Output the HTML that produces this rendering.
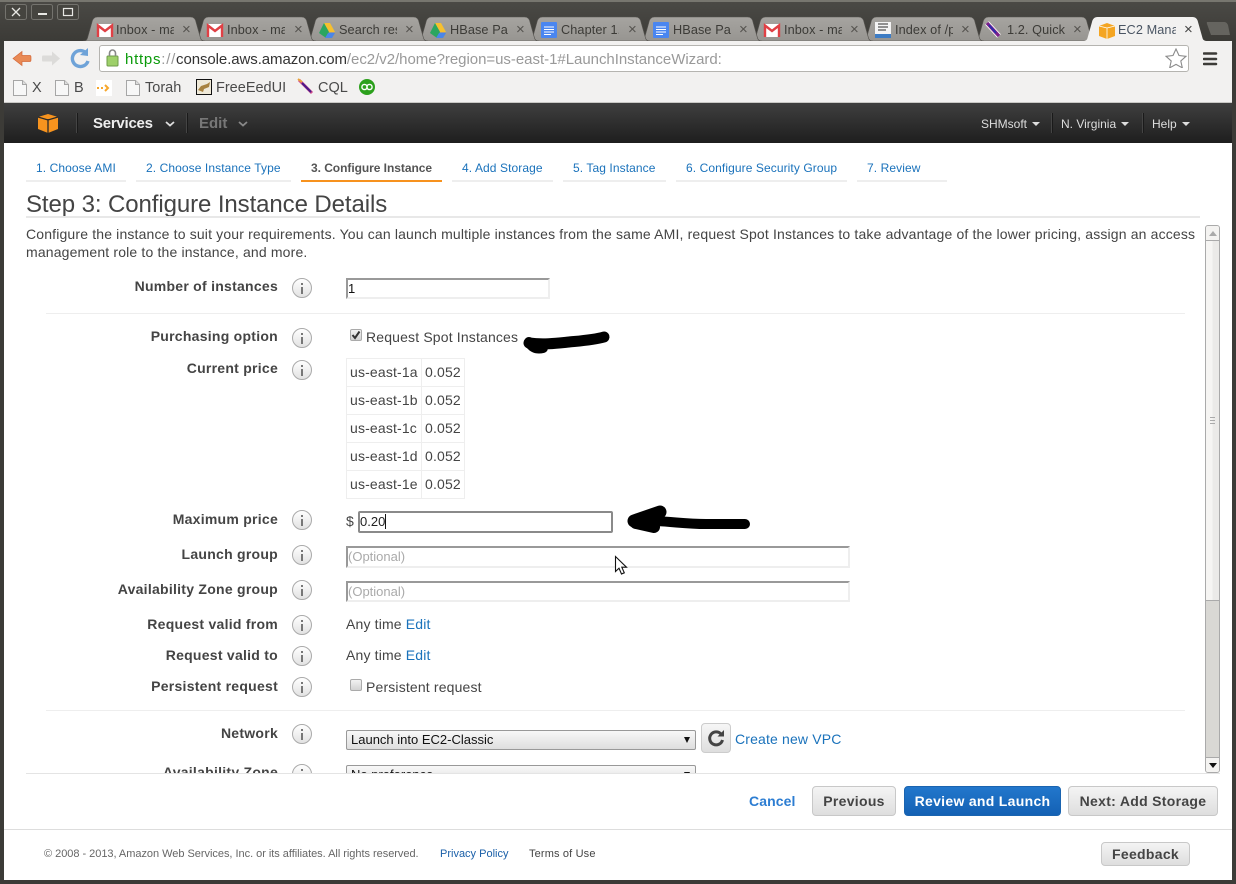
<!DOCTYPE html>
<html><head><meta charset="utf-8"><title>EC2 Management Console</title>
<style>
html,body{margin:0;padding:0;width:1236px;height:884px;overflow:hidden;background:#3c3b37;font-family:"Liberation Sans",sans-serif}
#w{position:relative;width:1236px;height:884px;overflow:hidden;background:linear-gradient(#4b4a46 0,#3c3b37 40px)}
.a{position:absolute;white-space:nowrap}
.tt{position:absolute;top:21px;height:18px;line-height:18px;font-size:12.7px;letter-spacing:.1px;color:#3c3b37;width:58px;overflow:hidden;white-space:nowrap}
.tx{position:absolute;top:21px;height:18px;line-height:18px;font-size:15px;color:#55534f}
.bm{position:absolute;top:78px;height:20px;line-height:20px;font-size:14.5px;color:#4a4a4a;white-space:nowrap}
.st{position:absolute;top:156px;height:24px;line-height:24px;font-size:12px;letter-spacing:.09px;color:#1a72bb;border-bottom:2px solid #eee;box-sizing:content-box;padding-left:10px;white-space:nowrap;overflow:hidden}
.l{position:absolute;right:927px;height:20px;line-height:20px;font-size:14px;letter-spacing:.26px;font-weight:bold;color:#444;white-space:nowrap}
.i{position:absolute;left:292px;width:18px;height:18px;margin-top:-1px;border-radius:50%;border:1px solid #aaa;background:linear-gradient(#fff,#e2e2e2);box-sizing:content-box}
.i:before{content:"";position:absolute;left:8px;top:4px;width:2px;height:2px;background:#777}
.i:after{content:"";position:absolute;left:8px;top:8px;width:2px;height:7px;background:#777}
.t{position:absolute;height:20px;line-height:20px;font-size:14px;letter-spacing:.16px;color:#444;white-space:nowrap}
.e{color:#1a72bb}
.in{position:absolute;box-sizing:border-box;background:#fff;border-style:solid;border-width:2px;border-color:#999 #eee #eee #999;font-size:13px;line-height:17px;color:#aaa;padding-left:0;overflow:hidden;white-space:nowrap}
.btn{position:absolute;top:786px;height:30px;box-sizing:border-box;border:1px solid #c8c8c8;border-radius:4px;background:linear-gradient(#f4f4f4,#dedede);font-size:14px;font-weight:bold;color:#444;line-height:28px;text-align:center;white-space:nowrap;letter-spacing:.3px}
.sel{position:absolute;left:346px;width:350px;height:20px;box-sizing:border-box;border:1px solid #999;border-radius:2px;background:linear-gradient(#f8f8f8,#dedede);font-size:13px;line-height:18px;color:#111;padding-left:4px}
.sel:after{content:"";position:absolute;right:5px;top:6px;border:3.5px solid transparent;border-top:6px solid #111;border-bottom:0}
.nav{position:absolute;top:114px;height:20px;line-height:20px;font-size:12px;color:#ddd;white-space:nowrap}
.ca{display:inline-block;vertical-align:2px;margin-left:5px;border:4px solid transparent;border-top:4px solid #ddd;border-bottom:0}
.div{position:absolute;top:113px;width:1px;height:20px;background:#444;border-right:1px solid #1a1a1a}
</style></head><body><div id="w">

<div class="a" style="left:0;top:0;width:1236px;height:2px;background:#77766f"></div>

<!-- window buttons -->
<svg class="a" style="left:0;top:0" width="90" height="24">
<g fill="none" stroke="#74736e"><rect x="5.5" y="4.5" width="21" height="15" rx="2" fill="#45443f"/><rect x="31.5" y="4.5" width="21" height="15" rx="2" fill="#45443f"/><rect x="57.5" y="4.5" width="21" height="15" rx="2" fill="#45443f"/></g>
<path d="M12 8l8 8M20 8l-8 8" stroke="#e8e8e4" stroke-width="1.300"/>
<path d="M38 14h9" stroke="#e8e8e4" stroke-width="2"/>
<rect x="63.5" y="8.5" width="9" height="7" fill="none" stroke="#e8e8e4" stroke-width="1.200"/>
</svg>

<!-- tabs -->
<svg class="a" style="left:0;top:0" width="1236" height="46">
<defs>
<linearGradient id="g" x1="0" y1="0" x2="0" y2="1"><stop offset="0" stop-color="#a6a4a0"/><stop offset="1" stop-color="#979591"/></linearGradient>
<path id="tb" d="M0 24c2.500 0 4-1 4.500-3l4.500-16c.6-3 2.500-5 5.500-5h93c3 0 5 2 5.500 5l4.500 16c.5 2 2 3 4.500 3z" fill="url(#g)" stroke="#55534f" stroke-width=".6"/>
</defs>
<use href="#tb" x="974" y="17"/><use href="#tb" x="862" y="17"/>
<use href="#tb" x="751" y="17"/><use href="#tb" x="640" y="17"/><use href="#tb" x="528" y="17"/>
<use href="#tb" x="417" y="17"/><use href="#tb" x="306" y="17"/><use href="#tb" x="194" y="17"/><use href="#tb" x="83" y="17"/>
<path d="M1083 41c2.500 0 4-1 4.500-3l4.500-16c.6-3 2.500-5 5.500-5h95c3 0 5 2 5.500 5l4.500 16c.5 2 2 3 5 3z" fill="#f2f1f0"/>
<path d="M1207 22h17c2 0 3 1 4 3l2 10h-19l-4-11c-.5-1 0-2 0-2z" fill="#65645f"/>
</svg>

<div class="tt" style="left:116px">Inbox - mail</div><div class="tx" style="left:182px">×</div>
<div class="tt" style="left:227px">Inbox - mail</div><div class="tx" style="left:294px">×</div>
<div class="tt" style="left:339px">Search results</div><div class="tx" style="left:405px">×</div>
<div class="tt" style="left:450px">HBase Package</div><div class="tx" style="left:516px">×</div>
<div class="tt" style="left:561px">Chapter 1.</div><div class="tx" style="left:628px">×</div>
<div class="tt" style="left:673px">HBase Package</div><div class="tx" style="left:739px">×</div>
<div class="tt" style="left:784px">Inbox - mail</div><div class="tx" style="left:850px">×</div>
<div class="tt" style="left:895px">Index of /pub</div><div class="tx" style="left:961px">×</div>
<div class="tt" style="left:1007px">1.2. Quick Start</div><div class="tx" style="left:1073px">×</div>
<div class="tt" style="left:1118px;color:#4a5563">EC2 Management</div><div class="tx" style="left:1184px;color:#444">×</div>

<!-- favicons -->
<svg class="a" style="left:0;top:0" width="1236" height="46">
<defs>
<g id="gm"><rect x="0" y="1" width="16" height="13" fill="#fff"/><path d="M1 14V2.500l7 5.500 7-5.500V14" fill="none" stroke="#e04045" stroke-width="2.400"/></g>
<g id="dr"><path d="M5 0h6l5 9h-6z" fill="#f6c02e"/><path d="M5 0l5 9-3 6L0 10z" fill="#2ba660"/><path d="M6 15l3-5h7l-3 5z" fill="#4b86e8"/></g>
<g id="dc"><rect width="16" height="16" rx="1" fill="#4a86f0"/><path d="M3 5h10M3 7.500h10M3 10h10M3 12.500h7" stroke="#fff" stroke-width="1"/></g>
</defs>
<use href="#gm" x="97" y="23"/><use href="#gm" x="207" y="23"/><use href="#dr" x="319" y="23"/><use href="#dr" x="430" y="23"/>
<use href="#dc" x="541" y="22"/><use href="#dc" x="653" y="22"/><use href="#gm" x="764" y="23"/>
<rect x="875" y="22" width="16" height="16" fill="#f4f4f4"/><rect x="875" y="34" width="16" height="4" fill="#3d7cc4"/><path d="M878 24h10M878 27h10M878 30h8" stroke="#555" stroke-width="1.200"/>
<path d="M987 23l12 13" stroke="#fff" stroke-width="5"/><path d="M987 23l12 13" stroke="#7a1f8a" stroke-width="3.400"/><path d="M989 25l7 8" stroke="#2330b0" stroke-width="1.600"/>
<path d="M1099 26l8-3 8 3v10l-8 3-8-3z" fill="#f4a522"/><path d="M1107 28v11M1099 26l8 2 8-2" stroke="#fff" stroke-width=".8" fill="none"/>
</svg>

<!-- toolbar -->
<div class="a" style="left:4px;top:41px;width:1228px;height:62px;background:#f2f1f0"></div>
<div class="a" style="left:4px;top:102px;width:1228px;height:1px;background:#c9c8c5"></div>
<svg class="a" style="left:0;top:41px" width="100" height="36">
<path d="M13 17.500l9-7v4h8c1 0 1 1 1 3s0 3-1 3h-8v4z" fill="#e98a55" stroke="#d4693a" stroke-width=".7"/>
<path d="M60 17.500l-8-7v4h-9c-1 0-1 1-1 3s0 3 1 3h9v4z" fill="#dcdbd9"/>
<path d="M85 11a8 8 0 1 0 3 9" fill="none" stroke="#6fa3d8" stroke-width="3.400"/><path d="M80 14l8 1 0-8z" fill="#6fa3d8"/>
</svg>
<div class="a" style="left:99px;top:45px;width:1090px;height:27px;box-sizing:border-box;background:#fff;border:1px solid #b5b4b0;border-radius:3px"></div>
<svg class="a" style="left:105px;top:48px" width="16" height="20"><rect x="2" y="8" width="11" height="10" rx="1" fill="#9ed06a" stroke="#6f9b4a"/><path d="M4.500 8V5a3 3 0 0 1 6 0v3" fill="none" stroke="#888" stroke-width="1.600"/></svg>
<div class="a" style="left:125px;top:50px;height:20px;line-height:20px;font-size:15px;letter-spacing:-.03px;color:#999"><span style="letter-spacing:.75px"><span style="color:#0a9a0a">https</span>://</span><span style="color:#333;letter-spacing:-.08px">console.aws.amazon.com</span>/ec2/v2/home?region=us-east-1#LaunchInstanceWizard:</div>
<svg class="a" style="left:1165px;top:48px" width="22" height="20"><path d="M11 1l3 6.500 7 .8-5.200 4.700 1.500 6.800L11 16.400 4.700 19.800l1.500-6.800L1 8.300l7-.8z" fill="#fff" stroke="#8a8a8a" stroke-width="1.100"/></svg>
<svg class="a" style="left:1203px;top:51px" width="16" height="16"><path d="M1 2.500h12M1 8h12M1 13h12" stroke="#3c3b37" stroke-width="2.500" stroke-linecap="round"/></svg>

<!-- bookmarks -->
<svg class="a" style="left:0;top:76px" width="400" height="24">
<defs><g id="pg"><path d="M.5.500h9l4 4v11H.5z" fill="#f7f7f7" stroke="#a6a6a6"/><path d="M9.500.500v4h4" fill="#ddd" stroke="#a6a6a6"/></g></defs>
<use href="#pg" x="13" y="4"/><use href="#pg" x="55" y="4"/><use href="#pg" x="126" y="4"/>
<rect x="96" y="4" width="16" height="16" fill="#fff"/><path d="M97 12h2M101 12h2M105 9l3 3-3 3" stroke="#f7a72c" stroke-width="2" fill="none"/>
<rect x="196.500" y="3.500" width="15" height="15" fill="#efe9d8" stroke="#111"/><path d="M198 14l3-4 6-2 3-2-1 5-5 2-1 3z" fill="#a8823e"/>
<path d="M299 4l13 13" stroke="#d04a8a" stroke-width="3"/><path d="M302 7l9 9" stroke="#4a1a8a" stroke-width="2"/><path d="M298 3l4 3" stroke="#e8a23a" stroke-width="2"/>
<circle cx="367" cy="11" r="8" fill="#2ca01c"/><circle cx="364.500" cy="11" r="2.600" fill="none" stroke="#fff" stroke-width="1.400"/><circle cx="369.500" cy="11" r="2.600" fill="none" stroke="#fff" stroke-width="1.400"/>
</svg>
<div class="bm" style="left:32px">X</div><div class="bm" style="left:74px">B</div><div class="bm" style="left:145px">Torah</div><div class="bm" style="left:216px">FreeEedUI</div><div class="bm" style="left:318px">CQL</div>

<!-- page -->
<div class="a" style="left:4px;top:103px;width:1228px;height:777px;background:#fff;overflow:hidden"></div>
<div class="a" style="left:4px;top:103px;width:1228px;height:40px;background:linear-gradient(#3f3f3f,#1e1e1e)"></div>
<svg class="a" style="left:37px;top:112px" width="22" height="22"><path d="M1 5l10-3 10 3v12l-10 4-10-4z" fill="#f7931e"/><path d="M11 7v14M1 5l10 3 10-3" stroke="#2a2a2a" stroke-width="1.300" fill="none"/></svg>
<div class="div" style="left:76px"></div>
<div class="a" style="left:93px;top:114px;height:20px;line-height:20px;font-size:15px;letter-spacing:-.25px;font-weight:bold;color:#eee">Services</div>
<svg class="a" style="left:165px;top:120px" width="10" height="8"><path d="M1 2l4 3.500L9 2" fill="none" stroke="#ddd" stroke-width="1.800"/></svg>
<div class="div" style="left:186px"></div>
<div class="a" style="left:199px;top:114px;height:20px;line-height:20px;font-size:15px;font-weight:bold;color:#777">Edit</div>
<svg class="a" style="left:238px;top:120px" width="10" height="8"><path d="M1 2l4 3.500L9 2" fill="none" stroke="#888" stroke-width="1.800"/></svg>
<div class="nav" style="left:981px">SHMsoft<span class="ca"></span></div>
<div class="div" style="left:1051px"></div>
<div class="nav" style="left:1061px">N. Virginia<span class="ca"></span></div>
<div class="div" style="left:1142px"></div>
<div class="nav" style="left:1152px">Help<span class="ca"></span></div>

<!-- steps -->
<div class="st" style="left:26px;width:90px">1. Choose AMI</div>
<div class="st" style="left:136px;width:145px">2. Choose Instance Type</div>
<div class="st" style="left:301px;width:131px;letter-spacing:-.05px;color:#555;font-weight:bold;border-bottom-color:#f7921e">3. Configure Instance</div>
<div class="st" style="left:452px;width:91px">4. Add Storage</div>
<div class="st" style="left:563px;width:93px">5. Tag Instance</div>
<div class="st" style="left:676px;width:161px">6. Configure Security Group</div>
<div class="st" style="left:857px;width:80px">7. Review</div>

<div class="a" style="left:26px;top:190px;height:30px;line-height:30px;font-size:24px;letter-spacing:-.09px;color:#444">Step 3: Configure Instance Details</div>
<div class="a" style="left:26px;top:216px;width:1174px;height:2px;background:#e8e8e8"></div>

<!-- scroll area -->
<div class="a" style="left:0;top:218px;width:1205px;height:555px;overflow:hidden">
 <div style="position:relative;top:-218px;height:800px">
 <div class="t" style="left:26px;top:224px">Configure the instance to suit your requirements. You can launch multiple instances from the same AMI, request Spot Instances to take advantage of the lower pricing, assign an access</div>
 <div class="t" style="left:26px;top:242px">management role to the instance, and more.</div>

 <div class="l" style="top:276px">Number of instances</div><div class="i" style="top:279px"></div>
 <div class="in" style="left:346px;top:278px;width:204px;height:21px;color:#111">1</div>
 <div class="a" style="left:46px;top:313px;width:1139px;height:1px;background:#eee"></div>

 <div class="l" style="top:326px">Purchasing option</div><div class="i" style="top:329px"></div>
 <div class="a" style="left:350px;top:329px;width:12px;height:12px;box-sizing:border-box;border:1px solid #aaa;border-radius:2px;background:linear-gradient(#f2f2f2,#d2d2d2)"></div>
 <svg class="a" style="left:351px;top:330px" width="10" height="10"><path d="M1.500 5l2.500 3L8.500 1.500" fill="none" stroke="#333" stroke-width="2"/></svg>
 <div class="t" style="left:366px;top:327px">Request Spot Instances</div>
 <svg class="a" style="left:515px;top:322px" width="100" height="34"><path d="M14 21c15 2 30 0 40-1s25-2 35-5" fill="none" stroke="#000" stroke-width="11" stroke-linecap="round"/><path d="M14 20c2 4 6 8 14 6" fill="none" stroke="#000" stroke-width="10" stroke-linecap="round"/></svg>

 <div class="l" style="top:358px">Current price</div><div class="i" style="top:361px"></div>
 <div class="a" style="left:346px;top:358px;width:119px;height:141px;box-sizing:border-box;border:1px solid #eee"></div>
 <div class="a" style="left:421px;top:358px;width:1px;height:141px;background:#eee"></div>
 <div class="a" style="left:346px;top:386px;width:119px;height:1px;background:#eee"></div>
 <div class="a" style="left:346px;top:414px;width:119px;height:1px;background:#eee"></div>
 <div class="a" style="left:346px;top:442px;width:119px;height:1px;background:#eee"></div>
 <div class="a" style="left:346px;top:470px;width:119px;height:1px;background:#eee"></div>
 <div class="t" style="left:350px;top:362px">us-east-1a</div><div class="t" style="left:425px;top:362px">0.052</div>
 <div class="t" style="left:350px;top:390px">us-east-1b</div><div class="t" style="left:425px;top:390px">0.052</div>
 <div class="t" style="left:350px;top:418px">us-east-1c</div><div class="t" style="left:425px;top:418px">0.052</div>
 <div class="t" style="left:350px;top:446px">us-east-1d</div><div class="t" style="left:425px;top:446px">0.052</div>
 <div class="t" style="left:350px;top:474px">us-east-1e</div><div class="t" style="left:425px;top:474px">0.052</div>

 <div class="l" style="top:509px">Maximum price</div><div class="i" style="top:511px"></div>
 <div class="t" style="left:346px;top:511px">$</div>
 <div class="a" style="left:358px;top:511px;width:255px;height:22px;box-sizing:border-box;border:2px solid #8a8a8a;border-radius:2px;background:#fff;font-size:13px;line-height:18px;color:#222;padding-left:0">0.20<span style="display:inline-block;width:1px;height:15px;background:#111;vertical-align:-3px"></span></div>
 <svg class="a" style="left:620px;top:500px" width="140" height="36"><path d="M14 21L40 12" fill="none" stroke="#000" stroke-width="13" stroke-linecap="round"/><path d="M16 23l18 4" fill="none" stroke="#000" stroke-width="12" stroke-linecap="round"/><path d="M36 21c20 1 30 3 50 3h39" fill="none" stroke="#000" stroke-width="10" stroke-linecap="round"/></svg>

 <div class="l" style="top:544px">Launch group</div><div class="i" style="top:546px"></div>
 <div class="in" style="left:346px;top:546px;width:504px;height:22px">(Optional)</div>
 <svg class="a" style="left:614px;top:555px" width="16" height="22"><path d="M1.500 1.500v15l3.500-3.300 2.500 5.800 2.800-1.200-2.500-5.600H12.500z" fill="#fff" stroke="#111" stroke-width="1.100"/></svg>

 <div class="l" style="top:579px">Availability Zone group</div><div class="i" style="top:581px"></div>
 <div class="in" style="left:346px;top:581px;width:504px;height:21px">(Optional)</div>

 <div class="l" style="top:614px">Request valid from</div><div class="i" style="top:616px"></div>
 <div class="t" style="left:346px;top:614px">Any time <span class="e">Edit</span></div>
 <div class="l" style="top:645px">Request valid to</div><div class="i" style="top:647px"></div>
 <div class="t" style="left:346px;top:645px">Any time <span class="e">Edit</span></div>
 <div class="l" style="top:676px">Persistent request</div><div class="i" style="top:678px"></div>
 <div class="a" style="left:350px;top:679px;width:12px;height:12px;box-sizing:border-box;border:1px solid #aaa;border-radius:2px;background:linear-gradient(#f2f2f2,#d2d2d2)"></div>
 <div class="t" style="left:366px;top:677px">Persistent request</div>
 <div class="a" style="left:46px;top:710px;width:1139px;height:1px;background:#eee"></div>

 <div class="l" style="top:723px">Network</div><div class="i" style="top:725px"></div>
 <div class="sel" style="top:730px">Launch into EC2-Classic</div>
 <div class="a" style="left:701px;top:723px;width:30px;height:30px;box-sizing:border-box;border:1px solid #ccc;border-radius:4px;background:linear-gradient(#f6f6f6,#dedede)"></div>
 <svg class="a" style="left:706px;top:728px" width="20" height="20"><path d="M15 6a6.500 6.500 0 1 0 1.500 6" fill="none" stroke="#444" stroke-width="3"/><path d="M11.500 8.500H18V2z" fill="#444"/></svg>
 <div class="t" style="left:735px;top:729px;color:#1a72bb">Create new VPC</div>
 <div class="l" style="top:762px">Availability Zone</div><div class="i" style="top:765px"></div>
 <div class="sel" style="top:765px">No preference</div>
 </div>
</div>

<!-- scrollbar -->
<div class="a" style="left:1205px;top:225px;width:15px;height:548px;box-sizing:border-box;border:1px solid #aaa;border-radius:3px;background:#d9d8d4;overflow:hidden">
 <div style="position:absolute;left:0;top:0;width:13px;height:14px;background:#f4f3f1;border-bottom:1px solid #aaa"></div>
 <div style="position:absolute;left:0;top:15px;width:13px;height:359px;background:linear-gradient(90deg,#f6f5f3 50%,#ebeae8 50%);border-bottom:1px solid #aaa"></div>
 <div style="position:absolute;left:4px;top:191px;width:5px;height:5px;border-top:1px solid #aaa;border-bottom:1px solid #aaa"></div>
 <div style="position:absolute;left:4px;top:194px;width:5px;height:1px;background:#aaa"></div>
 <div style="position:absolute;left:0;bottom:0;width:13px;height:14px;background:#f4f3f1;border-top:1px solid #aaa"></div>
 <div style="position:absolute;left:3px;top:5px;border:4px solid transparent;border-bottom:5px solid #aaa;border-top:0"></div>
 <div style="position:absolute;left:3px;bottom:4px;border:4px solid transparent;border-top:5px solid #111;border-bottom:0"></div>
</div>

<!-- footer -->
<div class="a" style="left:26px;top:773px;width:1194px;height:1px;background:#e4e4e4"></div>
<div class="a" style="left:749px;top:791px;height:20px;line-height:20px;font-size:14px;letter-spacing:.1px;font-weight:bold;color:#2c7dd2">Cancel</div>
<div class="btn" style="left:812px;width:84px">Previous</div>
<div class="btn" style="left:904px;width:157px;background:linear-gradient(#2277cc,#1461b4);border-color:#1a64b0;color:#fff">Review and Launch</div>
<div class="btn" style="left:1068px;width:150px">Next: Add Storage</div>
<div class="a" style="left:4px;top:829px;width:1228px;height:1px;background:#ddd"></div>
<div class="a" style="left:44px;top:845px;height:18px;line-height:18px;font-size:11px;letter-spacing:-.03px;color:#666">© 2008 - 2013, Amazon Web Services, Inc. or its affiliates. All rights reserved.</div>
<div class="a" style="left:440px;top:845px;height:18px;line-height:18px;font-size:11px;color:#1a5fa8">Privacy Policy</div>
<div class="a" style="left:529px;top:845px;height:18px;line-height:18px;font-size:11px;letter-spacing:.15px;color:#444">Terms of Use</div>
<div class="btn" style="left:1101px;top:842px;width:89px;height:24px;line-height:22px">Feedback</div>

</div></body></html>
